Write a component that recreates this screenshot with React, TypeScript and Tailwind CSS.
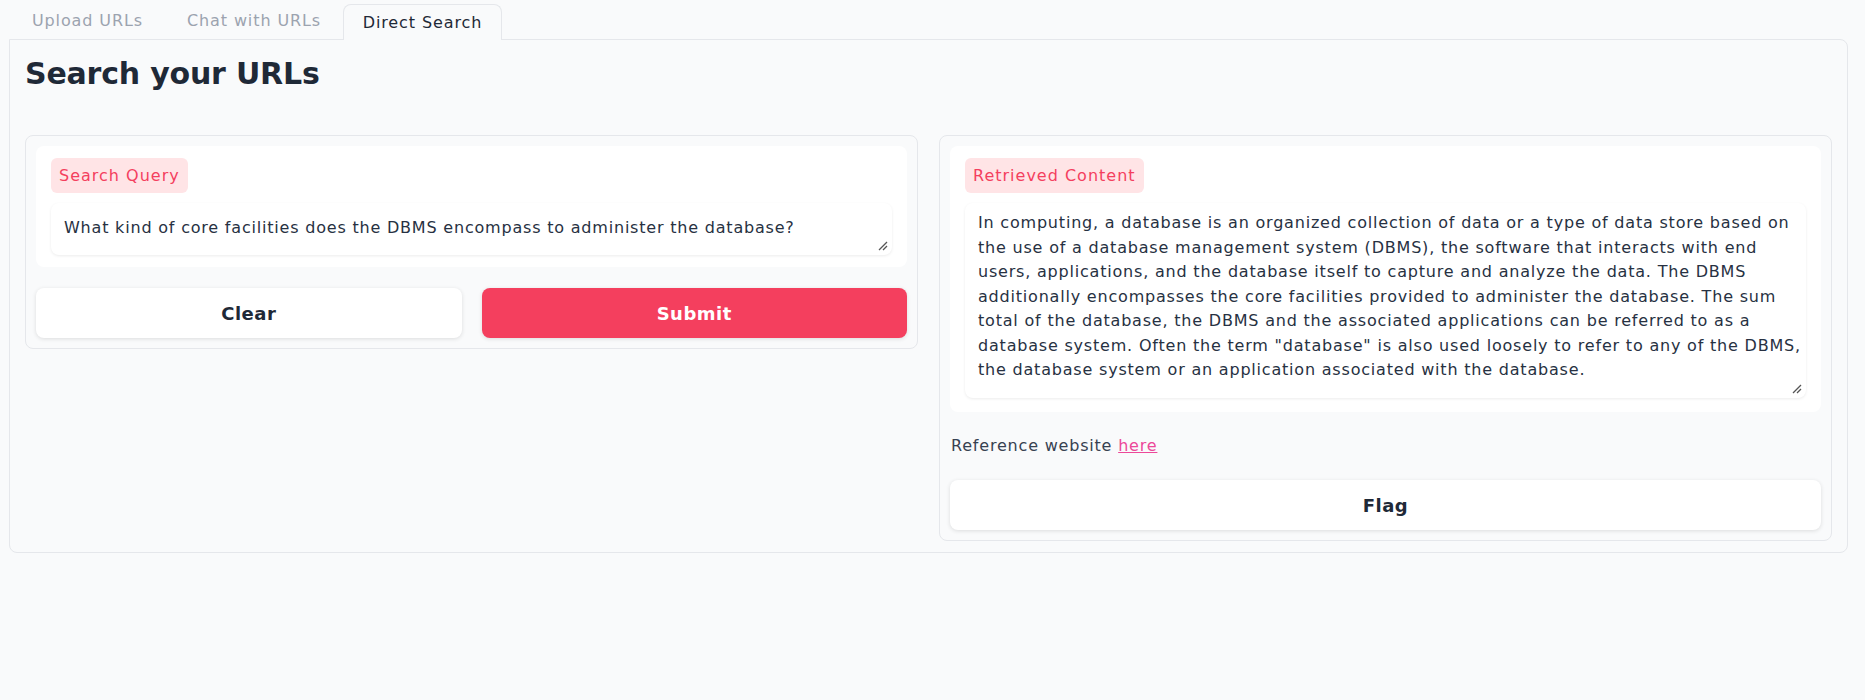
import React from "react";

const FONT = { fontFamily: '"DejaVu Sans", "Open Sans", sans-serif' };

function ResizeHandle() {
  return (
    <svg className="absolute right-[4px] bottom-[4px]" width="10" height="10" viewBox="0 0 10 10">
      <line x1="1" y1="9" x2="9" y2="1" stroke="#555" strokeWidth="1.2" />
      <line x1="5" y1="9" x2="9" y2="5" stroke="#555" strokeWidth="1.2" />
    </svg>
  );
}

const content = [
  "In computing, a database is an organized collection of data or a type of data store based on",
  "the use of a database management system (DBMS), the software that interacts with end",
  "users, applications, and the database itself to capture and analyze the data. The DBMS",
  "additionally encompasses the core facilities provided to administer the database. The sum",
  "total of the database, the DBMS and the associated applications can be referred to as a",
  'database system. Often the term "database" is also used loosely to refer to any of the DBMS,',
  "the database system or an application associated with the database.",
];

export default function App() {
  return (
    <div className="min-h-[700px] bg-[#f9fafb] text-[#1f2937]" style={FONT}>
      {/* Tabs */}
      <div className="flex pl-[10px] pt-[3px] h-[39px]">
        <div className="w-[155px] flex items-center justify-center text-[16px] tracking-[0.9px] text-[#9ca3af]">Upload URLs</div>
        <div className="w-[178px] flex items-center justify-center text-[16px] tracking-[0.9px] text-[#9ca3af]">Chat with URLs</div>
        <div className="w-[159px] flex items-center justify-center text-[16px] tracking-[0.9px] text-[#1f2937] border border-b-0 border-[#e5e7eb] rounded-t-[8px] bg-[#f9fafb] relative top-[1px]">
          Direct Search
        </div>
      </div>
      {/* Main */}
      <div className="mx-[9px] w-[1839px] border border-[#e5e7eb] rounded-b-[8px] rounded-tr-[8px] px-[15px] pb-[11px]">
        <div className="h-[95px] pt-[14px]">
          <h1 className="text-[30px] font-semibold tracking-[-0.2px] leading-[40px] text-[#1f2937]">Search your URLs</h1>
        </div>
        <div className="flex gap-[21px] items-start">
          {/* Left panel */}
          <div className="w-[893px] border border-[#e5e7eb] rounded-[8px] p-[10px]">
            <div className="bg-white rounded-[8px] px-[15px] pt-[12px] pb-[12px]">
              <div className="inline-flex h-[35px] items-center px-[8px] rounded-[6px] bg-[#ffe4e6] text-[#f43f5e] text-[16px] tracking-[1px]">
                Search Query
              </div>
              <div className="relative mt-[10px] h-[52px] rounded-[8px] bg-white shadow-[0_1px_3px_rgba(0,0,0,0.08)] px-[13px] pt-[13px] text-[16px] tracking-[0.8px] leading-[24.5px] whitespace-nowrap text-[#273142]">
                What kind of core facilities does the DBMS encompass to administer the database?
                <ResizeHandle />
              </div>
            </div>
            <div className="flex gap-[20px] mt-[21px]">
              <button className="flex-1 h-[50px] rounded-[8px] bg-white shadow-[0_1px_4px_rgba(0,0,0,0.12)] text-[18px] tracking-[0.5px] font-semibold text-[#1f2937]">
                Clear
              </button>
              <button className="flex-1 h-[50px] rounded-[8px] bg-[#f43f5e] shadow-[0_1px_4px_rgba(0,0,0,0.12)] text-[18px] tracking-[0.5px] font-semibold text-white">
                Submit
              </button>
            </div>
          </div>
          {/* Right panel */}
          <div className="w-[893px] border border-[#e5e7eb] rounded-[8px] p-[10px]">
            <div className="bg-white rounded-[8px] px-[15px] pt-[12px] pb-[14px]">
              <div className="inline-flex h-[35px] items-center px-[8px] rounded-[6px] bg-[#ffe4e6] text-[#f43f5e] text-[16px] tracking-[1px]">
                Retrieved Content
              </div>
              <div className="relative mt-[10px] h-[195px] rounded-[8px] bg-white shadow-[0_1px_3px_rgba(0,0,0,0.08)] px-[13px] pt-[8px] text-[16px] tracking-[0.8px] leading-[24.57px] whitespace-nowrap text-[#273142]">
                {content.map((l, i) => (
                  <div key={i}>{l}</div>
                ))}
                <ResizeHandle />
              </div>
            </div>
            <div className="h-[68px] flex items-center pl-[1px] text-[16px] tracking-[0.8px] text-[#374151]">
              <span>
                Reference website <a className="text-[#ec4899] underline">here</a>
              </span>
            </div>
            <button className="w-full h-[50px] rounded-[8px] bg-white shadow-[0_1px_4px_rgba(0,0,0,0.12)] text-[18px] tracking-[0.5px] font-semibold text-[#1f2937]">
              Flag
            </button>
          </div>
        </div>
      </div>
    </div>
  );
}
